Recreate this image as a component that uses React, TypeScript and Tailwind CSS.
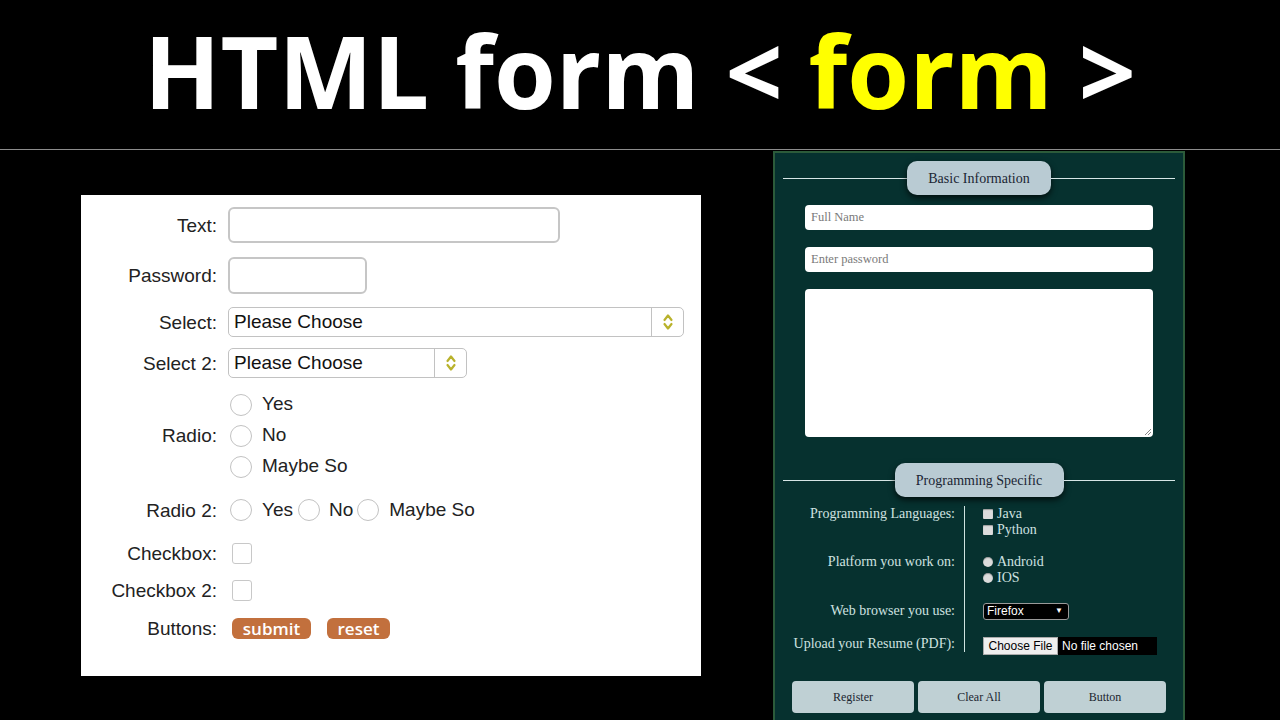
import React from "react";

const sans = { fontFamily: '"Liberation Sans", Arial, sans-serif' };
const serif = { fontFamily: '"Liberation Serif", "Times New Roman", serif' };

function Chevrons() {
  return (
    <svg width="12" height="20" viewBox="0 0 12 20">
      <path d="M2.5 8 L6 3.5 L9.5 8" fill="none" stroke="#b9b22c" strokeWidth="2.2" strokeLinecap="round" strokeLinejoin="round" />
      <path d="M2.5 12 L6 16.5 L9.5 12" fill="none" stroke="#b9b22c" strokeWidth="2.2" strokeLinecap="round" strokeLinejoin="round" />
    </svg>
  );
}

function Label({ children }: { children: React.ReactNode }) {
  return <div className="w-[136px] shrink-0 text-right text-[19px] text-[#222] leading-none">{children}</div>;
}

function Radio() {
  return <div className="h-[22px] w-[22px] shrink-0 rounded-full border-[1.5px] border-[#c2c2c2] bg-white" />;
}

function Select({ width }: { width: number }) {
  return (
    <div
      className="flex h-[30px] items-stretch rounded-[5px] border-[1.5px] border-[#c2c2c2] bg-white"
      style={{ width }}
    >
      <div className="flex flex-1 items-center pl-[5px] text-[19px] text-[#111]">Please Choose</div>
      <div className="flex w-[32px] items-center justify-center border-l-[1.5px] border-[#c2c2c2]">
        <Chevrons />
      </div>
    </div>
  );
}

function LeftForm() {
  return (
    <div className="mt-[45px] h-[481px] w-[620px] shrink-0 bg-white pt-[12px]" style={sans}>
      <div className="flex h-[36px] items-center">
        <Label>Text:</Label>
        <div className="ml-[11px] h-[36px] w-[332px] rounded-[6px] border-2 border-[#c6c6c6]" />
      </div>
      <div className="mt-[14px] flex h-[37px] items-center">
        <Label>Password:</Label>
        <div className="ml-[11px] h-[37px] w-[139px] rounded-[6px] border-2 border-[#c6c6c6]" />
      </div>
      <div className="mt-[13px] flex h-[30px] items-center">
        <Label>Select:</Label>
        <div className="ml-[11px]">
          <Select width={456} />
        </div>
      </div>
      <div className="mt-[11px] flex h-[30px] items-center">
        <Label>Select 2:</Label>
        <div className="ml-[11px]">
          <Select width={239} />
        </div>
      </div>
      <div className="mt-[11px] flex items-center">
        <Label>Radio:</Label>
        <div className="ml-[13px] flex flex-col">
          {["Yes", "No", "Maybe So"].map((t) => (
            <div key={t} className="flex h-[31px] items-center gap-[10px] text-[19px] text-[#222]">
              <Radio />
              <span>{t}</span>
            </div>
          ))}
        </div>
      </div>
      <div className="mt-[13px] flex h-[30px] items-center">
        <Label>Radio 2:</Label>
        <div className="ml-[13px] flex items-center text-[19px] text-[#222]">
          <Radio />
          <span className="ml-[10px]">Yes</span>
          <div className="ml-[5px]"><Radio /></div>
          <span className="ml-[9px]">No</span>
          <div className="ml-[4px]"><Radio /></div>
          <span className="ml-[10px]">Maybe So</span>
        </div>
      </div>
      <div className="mt-[13px] flex h-[30px] items-center">
        <Label>Checkbox:</Label>
        <div className="ml-[15px] h-[21px] w-[20px] rounded-[3px] border-[1.5px] border-[#c8c8c8]" />
      </div>
      <div className="mt-[7px] flex h-[30px] items-center">
        <Label>Checkbox 2:</Label>
        <div className="ml-[15px] h-[21px] w-[20px] rounded-[3px] border-[1.5px] border-[#c8c8c8]" />
      </div>
      <div className="mt-[8px] flex h-[30px] items-center">
        <Label>Buttons:</Label>
        <div className="ml-[15px] flex items-center gap-[16px]">
          <div
            className="flex h-[21px] w-[79px] items-center justify-center rounded-[6px] bg-[#c2703d] text-[17px] font-semibold leading-none text-white"
            style={{ fontFamily: '"Open Sans", sans-serif' }}
          >
            submit
          </div>
          <div
            className="flex h-[21px] w-[63px] items-center justify-center rounded-[6px] bg-[#c2703d] text-[17px] font-semibold leading-none text-white"
            style={{ fontFamily: '"Open Sans", sans-serif' }}
          >
            reset
          </div>
        </div>
      </div>
    </div>
  );
}

function Legend({ children, width }: { children: React.ReactNode; width: number }) {
  return (
    <div className="flex items-center px-[8px]">
      <div className="h-px flex-1 bg-[#d6e6e6]" />
      <div
        className="flex h-[34px] items-center justify-center rounded-[10px] bg-[#b9cbd3] text-[14px] text-[#1b2633] shadow-[0_3px_6px_rgba(0,0,0,0.7)]"
        style={{ width, ...serif }}
      >
        {children}
      </div>
      <div className="h-px flex-1 bg-[#d6e6e6]" />
    </div>
  );
}

function SmallCheck({ round }: { round?: boolean }) {
  return (
    <div
      className={
        "h-[10px] w-[10px] shrink-0 bg-[#dcdcdc] shadow-[inset_0_1px_1px_rgba(0,0,0,0.3)] " +
        (round ? "rounded-full" : "rounded-[1px]")
      }
    />
  );
}

function Opt({ label, round }: { label: string; round?: boolean }) {
  return (
    <div className="flex h-[16px] items-center gap-[4px] text-[14px] leading-[16px] text-[#cfe2e0]">
      <SmallCheck round={round} />
      <span>{label}</span>
    </div>
  );
}

function RightForm() {
  return (
    <div
      className="ml-[72px] mt-[1px] h-[580px] w-[412px] shrink-0 border-2 border-[#2c5b3a] bg-[#06312f] pt-[8px]"
      style={serif}
    >
      <Legend width={144}>Basic Information</Legend>
      <div className="mx-auto mt-[10px] flex h-[25px] w-[348px] items-center rounded-[4px] bg-white pl-[6px] text-[12.5px] text-[#7a7a7a]">
        Full Name
      </div>
      <div className="mx-auto mt-[17px] flex h-[25px] w-[348px] items-center rounded-[4px] bg-white pl-[6px] text-[12.5px] text-[#7a7a7a]">
        Enter password
      </div>
      <div className="relative mx-auto mt-[17px] h-[148px] w-[348px] rounded-[4px] bg-white">
        <svg className="absolute bottom-[1px] right-[1px]" width="8" height="8" viewBox="0 0 8 8">
          <path d="M7 1 L1 7 M7 4 L4 7" stroke="#888" strokeWidth="1" />
        </svg>
      </div>
      <div className="mt-[26px]">
        <Legend width={169}>Programming Specific</Legend>
      </div>
      <div className="mt-[8px]">
        <div className="flex h-[41px] pt-[1px]">
          <div className="w-[180px] shrink-0 text-right text-[14px] leading-[16px] text-[#cfe2e0]">Programming Languages:</div>
          <div className="ml-[9px] w-px shrink-0 bg-[#cfe2e0]" />
          <div className="ml-[18px] flex flex-col">
            <Opt label="Java" />
            <Opt label="Python" />
          </div>
        </div>
        <div className="flex h-[48px]">
          <div className="w-[180px] shrink-0 pt-[8px] text-right text-[14px] leading-[16px] text-[#cfe2e0]">
            Platform you work on:
          </div>
          <div className="ml-[9px] w-px shrink-0 bg-[#cfe2e0]" />
          <div className="ml-[18px] flex flex-col pt-[8px]">
            <Opt label="Android" round />
            <Opt label="IOS" round />
          </div>
        </div>
        <div className="flex h-[34px] items-center">
          <div className="w-[180px] shrink-0 text-right text-[14px] leading-[16px] text-[#cfe2e0]">Web browser you use:</div>
          <div className="ml-[9px] h-full w-px shrink-0 bg-[#cfe2e0]" />
          <div
            className="ml-[18px] flex h-[17px] w-[86px] items-center justify-between rounded-[3px] border border-[#9a9a9a] bg-black pl-[3px] pr-[5px] text-[12px] text-white"
            style={sans}
          >
            <span>Firefox</span>
            <span className="text-[8px]">▼</span>
          </div>
        </div>
        <div className="flex h-[24px] items-start">
          <div className="mt-[8px] w-[180px] shrink-0 text-right text-[14px] leading-[16px] text-[#cfe2e0]">
            Upload your Resume (PDF):
          </div>
          <div className="ml-[9px] h-full w-px shrink-0 bg-[#cfe2e0]" />
          <div className="ml-[18px] mt-[9px] flex h-[18px] items-stretch text-[12px]" style={sans}>
            <div className="flex w-[75px] items-center justify-center border border-[#aaa] bg-[#efefef] text-black">
              Choose File
            </div>
            <div className="flex w-[99px] items-center bg-black pl-[4px] text-white">No file chosen</div>
          </div>
        </div>
      </div>
      <div className="ml-[17px] mt-[29px] flex gap-[4px]">
        {["Register", "Clear All", "Button"].map((t) => (
          <div
            key={t}
            className="flex h-[32px] w-[122px] items-center justify-center rounded-[4px] bg-[#bfd0d4] text-[12px] text-[#1b2630]"
          >
            {t}
          </div>
        ))}
      </div>
    </div>
  );
}

export default function App() {
  return (
    <div className="h-[720px] w-[1280px] overflow-hidden bg-black">
      <div className="flex h-[149px] items-center justify-center">
        <div
          className="mt-[-9px] text-[100px] font-bold leading-none text-white"
          style={{ fontFamily: '"Open Sans", sans-serif' }}
        >
          HTML form &lt; <span className="text-[#ffff00]">form</span> &gt;
        </div>
      </div>
      <div className="h-px bg-[#8c8c8c]" />
      <div className="flex items-start pl-[81px]">
        <LeftForm />
        <RightForm />
      </div>
    </div>
  );
}
